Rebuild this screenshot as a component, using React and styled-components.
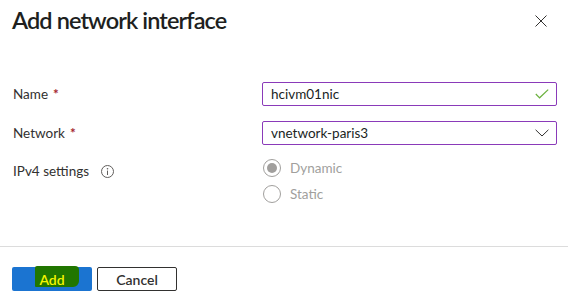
import React from "react";
import styled, { createGlobalStyle } from "styled-components";

const Global = createGlobalStyle`
  html, body { margin: 0; padding: 0; background: #fff; }
  body { font-family: Lato, "Open Sans", sans-serif; color: #323130; }
  * { box-sizing: border-box; }
`;

const Dialog = styled.div`
  width: 568px;
  height: 302px;
  display: flex;
  flex-direction: column;
  background: #fff;
`;

const Header = styled.header`
  height: 42px;
  display: flex;
  align-items: flex-start;
  justify-content: space-between;
  padding: 4px 21px 0 12px;
`;

const Title = styled.h1`
  margin: 0;
  font-size: 23.5px;
  line-height: 32px;
  font-weight: 600;
  letter-spacing: -0.9px;
  color: #201f1e;
`;

const CloseButton = styled.button`
  width: 12px;
  height: 12px;
  margin-top: 11px;
  padding: 0;
  border: 0;
  background: none;
  display: flex;
  cursor: pointer;
`;

const Body = styled.main`
  flex: 1;
  padding: 40px 11px 0 13px;
  display: flex;
  flex-direction: column;
`;

const FieldRow = styled.div`
  display: grid;
  grid-template-columns: 249px 295px;
  align-items: ${(p) => (p.$top ? "start" : "center")};
  margin-top: ${(p) => p.$gap || 0}px;
`;

const Label = styled.label`
  font-size: 13.5px;
  line-height: 20px;
  color: #323130;
  display: flex;
  align-items: center;
  gap: 4px;
  margin-top: ${(p) => p.$offset || 0}px;
`;

const Required = styled.span`
  color: #a4262c;
  font-weight: 700;
  margin-left: 1px;
`;

const InfoIcon = styled.svg`
  margin-left: 8px;
  flex: none;
`;

const InputBox = styled.div`
  height: 24px;
  border: 1px solid #8a3ab9;
  border-radius: 2px;
  display: flex;
  align-items: center;
  justify-content: space-between;
  padding: 0 7px 0 8px;
  font-size: 13.5px;
  color: #201f1e;
`;

const RadioGroup = styled.div`
  display: flex;
  flex-direction: column;
`;

const RadioItem = styled.div`
  height: 26px;
  display: flex;
  align-items: center;
  gap: 9px;
  font-size: 13.5px;
  color: #a19f9d;
`;

const RadioCircle = styled.span`
  width: 18px;
  height: 18px;
  margin-left: 1px;
  border-radius: 50%;
  border: 1px solid #a19f9d;
  display: flex;
  align-items: center;
  justify-content: center;
  &::after {
    content: "";
    width: 10px;
    height: 10px;
    border-radius: 50%;
    background: ${(p) => (p.$checked ? "#a19f9d" : "transparent")};
  }
`;

const Footer = styled.footer`
  height: 56px;
  border-top: 1px solid #dcdcdc;
  padding: 20px 12px 0;
  display: flex;
  align-items: flex-start;
  gap: 5px;
`;

const PrimaryButton = styled.button`
  position: relative;
  width: 80px;
  height: 24px;
  border: 0;
  border-radius: 2px;
  background: #1b74d1;
  padding: 0;
  font-family: inherit;
  font-size: 14px;
  font-weight: 600;
  display: flex;
  align-items: center;
  justify-content: center;
  cursor: pointer;
`;

const Highlight = styled.span`
  position: absolute;
  left: 23px;
  top: -1px;
  width: 44px;
  height: 21px;
  background: #217600;
  border-radius: 2px 4px 6px 1px;
`;

const PrimaryText = styled.span`
  position: relative;
  color: #f4f400;
`;

const SecondaryButton = styled.button`
  width: 80px;
  height: 24px;
  border: 1px solid #323130;
  border-radius: 2px;
  background: #fff;
  padding: 0;
  font-family: inherit;
  font-size: 14px;
  font-weight: 600;
  color: #323130;
  cursor: pointer;
`;

export default function App() {
  return (
    <>
      <Global />
      <Dialog>
        <Header>
          <Title>Add network interface</Title>
          <CloseButton aria-label="Close">
            <svg width="12" height="12" viewBox="0 0 12 12">
              <path d="M0.5 0.5 L11.5 11.5 M11.5 0.5 L0.5 11.5" stroke="#323130" strokeWidth="1" fill="none" />
            </svg>
          </CloseButton>
        </Header>
        <Body>
          <FieldRow>
            <Label>
              Name <Required>*</Required>
            </Label>
            <InputBox>
              <span>hcivm01nic</span>
              <svg width="14" height="10" viewBox="0 0 14 10">
                <path d="M0.8 5 L4.6 8.8 L13.2 0.6" stroke="#6bb13e" strokeWidth="1.2" fill="none" />
              </svg>
            </InputBox>
          </FieldRow>
          <FieldRow $gap={15}>
            <Label>
              Network <Required>*</Required>
            </Label>
            <InputBox>
              <span>vnetwork-paris3</span>
              <svg width="14" height="8" viewBox="0 0 14 8">
                <path d="M0.6 0.8 L7 7 L13.4 0.8" stroke="#323130" strokeWidth="1" fill="none" />
              </svg>
            </InputBox>
          </FieldRow>
          <FieldRow $gap={10} $top>
            <Label $offset={6}>
              IPv4 settings
              <InfoIcon width="13" height="13" viewBox="0 0 13 13">
                <circle cx="6.5" cy="6.5" r="6" stroke="#605e5c" strokeWidth="1" fill="none" />
                <circle cx="6.5" cy="3.8" r="0.8" fill="#605e5c" />
                <path d="M6.5 5.6 V10" stroke="#605e5c" strokeWidth="1" />
              </InfoIcon>
            </Label>
            <RadioGroup>
              <RadioItem>
                <RadioCircle $checked />
                Dynamic
              </RadioItem>
              <RadioItem>
                <RadioCircle />
                Static
              </RadioItem>
            </RadioGroup>
          </FieldRow>
        </Body>
        <Footer>
          <PrimaryButton>
            <Highlight />
            <PrimaryText>Add</PrimaryText>
          </PrimaryButton>
          <SecondaryButton>Cancel</SecondaryButton>
        </Footer>
      </Dialog>
    </>
  );
}
